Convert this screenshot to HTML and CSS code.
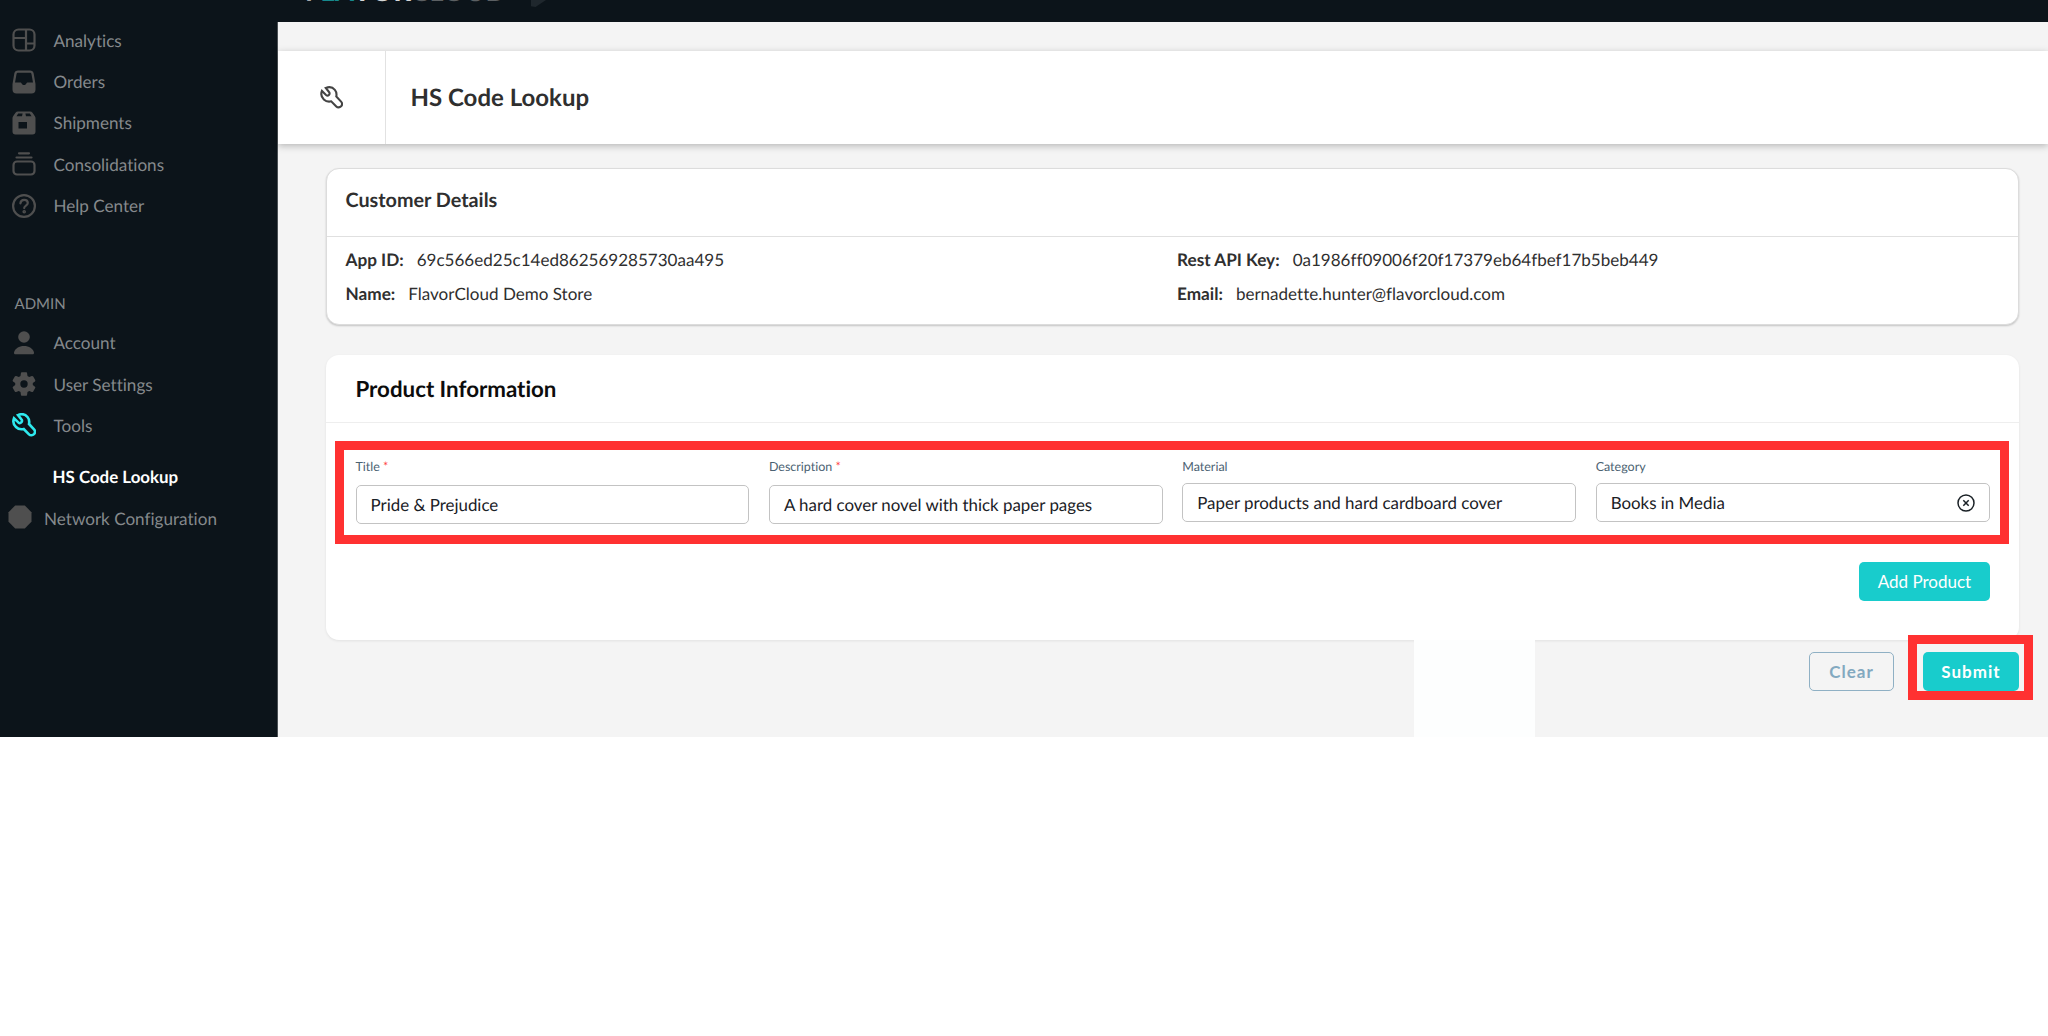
FILE: index.html
```html
<!DOCTYPE html>
<html lang="en">
<head>
    <meta charset="UTF-8">
    <title>HS Code Lookup</title>
    <link rel="stylesheet" href="styles.css">
</head>
<body>
<div id="app">
    <nav id="sidebar">
        <ul class="menu">
            <li>
                <svg viewBox="0 0 24 24" class="line"><rect x="1.5" y="1.5" width="21" height="21" rx="5"/><path d="M14 1.5v21M1.5 10H14M14 15.5h8.5"/></svg>
                <span>Analytics</span>
            </li>
            <li>
                <svg viewBox="0 0 24 24"><path fill-rule="evenodd" d="M6 .5h12c2 0 3.400 1.200 3.700 3.100L23.500 14v5.500a4 4 0 0 1-4 4h-15a4 4 0 0 1-4-4V14L2.300 3.600C2.600 1.700 4 .5 6 .5zM6.200 2.800c-1 0-1.500.5-1.700 1.400L3 12.500h5c1 0 1.400.5 1.800 1.200.5.900 1.200 1.300 2.200 1.300s1.700-.4 2.200-1.300c.4-.7.8-1.200 1.800-1.200h5l-1.500-8.300c-.2-.9-.7-1.400-1.700-1.400z"/></svg>
                <span>Orders</span>
            </li>
            <li>
                <svg viewBox="0 0 24 24"><path fill-rule="evenodd" d="M6 .5h12a3 3 0 0 1 2.500 1.300l2.400 3.400c.4.600.6 1.200.6 1.800v13.500a3 3 0 0 1-3 3h-17a3 3 0 0 1-3-3V7c0-.6.200-1.200.6-1.800l2.400-3.400A3 3 0 0 1 6 .5zM6.200 2.600L4.500 5.300H10l.6-2.700zM13.400 2.600l.6 2.700h5.500l-1.700-2.700zM6.500 11v6.500h8.500V11z"/></svg>
                <span>Shipments</span>
            </li>
            <li>
                <svg viewBox="0 0 24 24" class="line"><rect x="1.500" y="9.500" width="21" height="13" rx="3.500"/><path stroke-linecap="round" d="M4.500 5.500h15M7 1.300h10"/></svg>
                <span>Consolidations</span>
            </li>
            <li>
                <svg viewBox="0 0 24 24" class="line"><circle cx="12" cy="12" r="10.900"/><path stroke-linecap="round" d="M8.400 9.300c.2-2.200 1.700-3.500 3.700-3.500 2.100 0 3.700 1.300 3.700 3.200 0 2.600-3.600 2.700-3.600 5.100"/><circle cx="12.200" cy="17.800" r=".7"/></svg>
                <span>Help Center</span>
            </li>
        </ul>
        <h4>ADMIN</h4>
        <ul class="menu">
            <li>
                <svg viewBox="0 0 24 24"><circle cx="12" cy="6" r="5.800"/><path d="M2 21.500C3 17.500 7 15 12 15s9 2.500 10 6.500c.2 1-.4 1.800-1.500 1.800h-17c-1.100 0-1.700-.8-1.500-1.800z"/></svg>
                <span>Account</span>
            </li>
            <li>
                <svg viewBox="0 0 24 24"><path fill-rule="evenodd" d="M10 .3h4c.7 0 1 .4 1.100 1l.4 2.700 1.700 1 2.600-1c.6-.2 1.100 0 1.400.5l2 3.400c.3.600.2 1.100-.2 1.500L20.800 11v2l2.200 1.700c.4.400.5.900.2 1.400l-2 3.400c-.3.500-.8.700-1.400.5l-2.600-1-1.700 1-.4 2.700c-.1.600-.4 1-1.100 1h-4c-.7 0-1-.4-1.100-1L8.500 20l-1.700-1-2.600 1c-.6.200-1.100 0-1.400-.5l-2-3.400c-.3-.5-.2-1 .2-1.400L3.200 13v-2L1 9.400c-.4-.4-.5-.9-.2-1.500l2-3.400c.3-.5.800-.7 1.400-.5l2.600 1 1.700-1 .4-2.700c.1-.6.4-1 .9-1zM12 8.300a3.700 3.700 0 1 0 0 7.400 3.700 3.700 0 0 0 0-7.400z"/></svg>
                <span>User Settings</span>
            </li>
            <li class="open">
                <svg viewBox="0 0 24 24" class="line"><path d="M6 2.100C9.500.6 13.300 1.400 15.500 4c1.700 2 2 4.500 1.500 7l5 5.300c1.300 1.500 1.200 3.600 0 4.900-1.400 1.400-3.600 1.500-5 .1l-5.300-5.300c-2.700.6-5.500.2-7.700-2C1.500 11.700.8 8.300 2 5.200l4.300 4.200c1 .8 2.200.7 3-.1.900-.8 1-2 .1-3z"/></svg>
                <span>Tools</span>
            </li>
        </ul>
        <a class="submenu">HS Code Lookup</a>
        <div class="network">
            <svg viewBox="0 0 24 24"><path d="M7.200.5h9.600l6.700 6.700v9.600l-6.700 6.700H7.200L.5 16.800V7.200z"/></svg>
            <span>Network Configuration</span>
        </div>
    </nav>
    <div id="main">
        <div id="topbar">
            <div class="logo"><span>F</span><b>LA</b><strong>VOR</strong><em>CLOUD</em></div>
            <i class="pointer"></i>
        </div>
        <header>
            <div class="header-icon">
                <svg viewBox="0 0 24 24" class="line"><path d="M6 2.100C9.500.6 13.300 1.400 15.500 4c1.700 2 2 4.500 1.500 7l5 5.300c1.300 1.500 1.200 3.600 0 4.900-1.400 1.400-3.600 1.500-5 .1l-5.300-5.300c-2.700.6-5.500.2-7.700-2C1.500 11.700.8 8.300 2 5.200l4.300 4.200c1 .8 2.200.7 3-.1.900-.8 1-2 .1-3z"/></svg>
            </div>
            <h1>HS Code Lookup</h1>
        </header>
        <section id="customer">
            <h2>Customer Details</h2>
            <div class="details">
                <p><b>App ID:</b><span>69c566ed25c14ed862569285730aa495</span></p>
                <p><b>Rest API Key:</b><span>0a1986ff09006f20f17379eb64fbef17b5beb449</span></p>
                <p><b>Name:</b><span>FlavorCloud Demo Store</span></p>
                <p><b>Email:</b><span>bernadette.hunter@flavorcloud.com</span></p>
            </div>
        </section>
        <section id="product">
            <h2>Product Information</h2>
            <div class="fields">
                <div class="field required">
                    <label>Title <i>*</i></label>
                    <div class="input">Pride &amp; Prejudice</div>
                </div>
                <div class="field required">
                    <label>Description <i>*</i></label>
                    <div class="input">A hard cover novel with thick paper pages</div>
                </div>
                <div class="field">
                    <label>Material</label>
                    <div class="input">Paper products and hard cardboard cover</div>
                </div>
                <div class="field">
                    <label>Category</label>
                    <div class="input">
                        Books in Media
                        <svg viewBox="0 0 18 18"><circle cx="9" cy="9" r="8"/><path d="M6.300 6.300l5.400 5.400M11.700 6.300l-5.400 5.400"/></svg>
                    </div>
                </div>
            </div>
            <button class="add">Add Product</button>
        </section>
        <div id="actions">
            <div class="patch"></div>
            <button class="clear">Clear</button>
            <div class="submit-box"><button class="submit">Submit</button></div>
        </div>
    </div>
</div>
</body>
</html>
```
FILE: styles.css
```css
* {
    box-sizing: border-box;
}

body {
    margin: 0;
    background: #fff;
    font-family: Lato, "Liberation Sans", sans-serif;
    font-size: 17px;
    font-variant-ligatures: no-common-ligatures;
    text-rendering: geometricPrecision;
    color: #2f2f2f;
}

h1, h2, h4, p, ul {
    margin: 0;
    padding: 0;
}

button {
    font-family: inherit;
    font-size: 17px;
    padding: 0;
    border: 0;
    border-radius: 5px;
}

#app {
    display: flex;
    height: 737px;
    overflow: hidden;
}

/* Sidebar */
#sidebar {
    width: 278px;
    flex: none;
    padding-top: 19.5px;
    background: #0c141a;
    border-right: 1px solid #4a5054;
    color: #85898c;
    font-size: 17.1px;
}

#sidebar svg {
    width: 24px;
    height: 24px;
    fill: #4f4f4f;
}

#sidebar svg.line {
    fill: none;
    stroke: #4f4f4f;
    stroke-width: 2.2;
}

.menu {
    list-style: none;
}

.menu li {
    display: flex;
    align-items: center;
    gap: 17.5px;
    height: 41.4px;
    padding-left: 12px;
}

#sidebar h4 {
    height: 37.5px;
    margin-top: 58px;
    padding-left: 14.5px;
    font-size: 15px;
    font-weight: 400;
    line-height: 40px;
}

#sidebar .open svg.line {
    stroke: #2ee9ee;
    stroke-width: 2.6;
}

.submenu {
    display: block;
    height: 41px;
    margin-top: 10px;
    padding-left: 52.5px;
    color: #fff;
    font-size: 16.9px;
    font-weight: 700;
    line-height: 41px;
}

.network {
    display: flex;
    align-items: center;
    gap: 12.5px;
    height: 42px;
    padding-left: 7.5px;
}

.network svg {
    margin-top: -3px;
}

/* Page */
#main {
    flex: 1;
    min-width: 0;
    background: #f4f4f4;
}

#topbar {
    display: flex;
    gap: 22px;
    height: 22px;
    padding-left: 28px;
    margin-left: -1px;
    background: #0c141a;
    overflow: hidden;
}

.logo {
    width: 204px;
    margin-top: -27px;
    font-size: 27px;
    font-weight: 700;
    line-height: 35px;
    letter-spacing: 0.3px;
    color: #a5a8aa;
}

.logo b {
    color: #16898c;
}

.logo strong {
    color: #d5d7d8;
}

.logo em {
    color: #5c6063;
    font-style: normal;
}

.pointer {
    width: 15px;
    height: 7px;
    background: #1f272d;
    clip-path: polygon(0 0, 100% 0, 30% 100%, 0 90%);
}

header {
    display: flex;
    height: 93px;
    margin-top: 29px;
    background: #fff;
    box-shadow: 0 2px 7px rgba(0, 0, 0, 0.25);
}

.header-icon {
    display: flex;
    align-items: center;
    justify-content: center;
    width: 108px;
    padding-right: 1px;
    border-right: 1px solid #e2e2e2;
}

.header-icon svg {
    width: 23px;
    fill: none;
    stroke: #444;
    stroke-width: 2.2;
}

h1 {
    padding-left: 24.5px;
    font-size: 24px;
    line-height: 94px;
}

section {
    margin: 0 29px 0 48px;
    background: #fff;
    border-radius: 13px;
}

#customer {
    height: 157px;
    margin-top: 24px;
    border: 1px solid #dcdcdc;
    box-shadow: 0 1px 2px rgba(0, 0, 0, 0.2);
}

#customer h2 {
    height: 68px;
    padding-left: 18.5px;
    border-bottom: 1px solid #e0e0e0;
    font-size: 19.8px;
    line-height: 62px;
}

.details {
    display: grid;
    grid-template-columns: 831.5px 1fr;
    grid-auto-rows: 34px;
    padding: 6px 0 0 18.5px;
    line-height: 34px;
}

.details b {
    margin-right: 13px;
    font-size: 17.2px;
}

.details span {
    font-size: 17.05px;
}

#product {
    height: 285px;
    margin-top: 30px;
    box-shadow: 0 1px 3px rgba(0, 0, 0, 0.08);
    overflow: hidden;
}

#product h2 {
    height: 68px;
    padding-left: 29.5px;
    border-bottom: 1px solid #eee;
    color: #0c0c0c;
    font-size: 22.3px;
    line-height: 67px;
}

.fields {
    display: grid;
    grid-template-columns: repeat(4, 1fr);
    gap: 19.5px;
    height: 103px;
    margin: 18px 10px 0 9px;
    padding: 8px 10.5px 0 11.5px;
    border: 9px solid #ff3131;
}

.field label {
    display: block;
    font-size: 12.5px;
    line-height: 17px;
    color: #4b6272;
}

.field label i {
    color: #ff4040;
    font-style: normal;
}

.input {
    display: flex;
    align-items: center;
    justify-content: space-between;
    height: 39px;
    margin-top: 8px;
    padding: 0 14px;
    border: 1px solid #c3c3c3;
    border-radius: 5px;
    color: #1a2126;
    font-size: 16.9px;
}

.required .input {
    margin-top: 10px;
}

.input svg {
    width: 18px;
    fill: none;
    stroke: #1a2126;
    stroke-width: 1.5;
}

.add {
    display: block;
    width: 131px;
    height: 39px;
    margin: 18px 29px 0 auto;
    background: #18cccc;
    color: #fff;
}

#actions {
    display: flex;
    height: 97px;
}

.patch {
    width: 121px;
    margin: 0 274px 0 1136px;
    background: #fdfefe;
}

.clear {
    width: 85px;
    height: 39px;
    margin-top: 12px;
    border: 1px solid #8fb0c4;
    background: none;
    color: #83a9c0;
    font-weight: 700;
    letter-spacing: 1px;
}

/* Overlaps the bottom edge of the product card */
.submit-box {
    width: 125px;
    height: 65px;
    margin: -5px 0 0 14px;
    padding: 8px 5px 0 6px;
    border: 9px solid #ff3131;
    position: relative;
}

.submit {
    width: 96px;
    height: 39px;
    background: #18cccc;
    color: #fff;
    font-weight: 700;
    letter-spacing: 1px;
}
```
